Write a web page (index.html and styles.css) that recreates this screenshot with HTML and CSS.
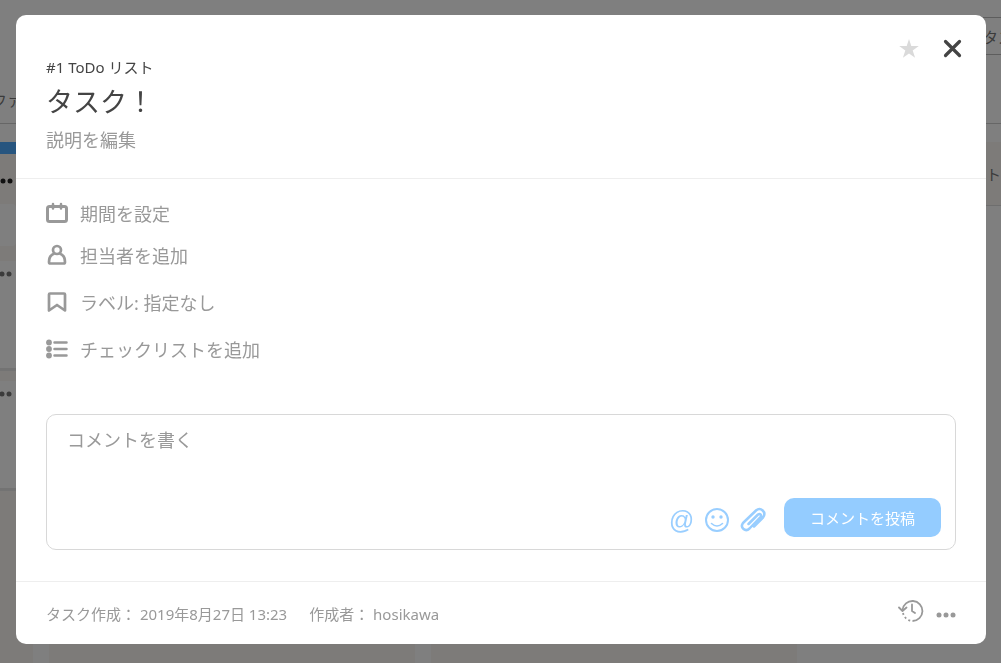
FILE: index.html
```html
<!DOCTYPE html>
<html lang="ja">
<head>
    <meta charset="UTF-8">
    <meta name="viewport" content="width=device-width, initial-scale=1.0">
    <title>タスク！ - ToDo リスト</title>
    <link rel="stylesheet" href="styles.css">
</head>
<body>
    <!-- Board behind the dialog -->
    <div class="board">
        <header class="board-header">
            <nav class="board-nav">
                <a href="#" class="board-tab">ファ</a>
                <div class="search-box">タス</div>
            </nav>
        </header>
        <main class="lanes">
            <section class="lane lane-first">
                <div class="lane-bar"></div>
                <div class="lane-menu">
                    <svg width="14" height="6" viewBox="0 0 14 6" fill="#222"><circle cx="3" cy="3" r="2.500"/><circle cx="10" cy="3" r="2.500"/></svg>
                </div>
                <div class="add-card"></div>
                <article class="card">
                    <svg width="14" height="6" viewBox="0 0 14 6" fill="#777"><circle cx="2" cy="3" r="2.500"/><circle cx="9" cy="3" r="2.500"/></svg>
                </article>
                <article class="card">
                    <svg width="14" height="6" viewBox="0 0 14 6" fill="#777"><circle cx="2" cy="3" r="2.500"/><circle cx="9" cy="3" r="2.500"/></svg>
                </article>
            </section>
            <section class="lane"></section>
            <section class="lane"></section>
            <div class="lane-space"></div>
            <section class="lane-new">ト</section>
        </main>
    </div>

    <!-- Task dialog -->
    <div class="overlay">
        <div class="modal" role="dialog" aria-labelledby="task-title">
            <div class="task-header">
                <div class="task-heading">
                    <p class="list-name">#1 ToDo リスト</p>
                    <h1 id="task-title">タスク！</h1>
                    <button class="text-button" type="button">説明を編集</button>
                </div>
                <div class="header-actions">
                    <button class="icon-button" type="button" aria-label="お気に入り">
                        <svg width="20" height="20" viewBox="0 0 20 20"><path fill="#dadada" d="M10 0L12.300 7.100H19.800L13.700 11.500L16.100 18.800L10 14.400L3.900 18.800L6.300 11.500L0.200 7.100H7.700Z"/></svg>
                    </button>
                    <button class="icon-button" type="button" aria-label="閉じる">
                        <svg width="20" height="20" viewBox="0 0 20 20"><path stroke="#444" stroke-width="3.200" stroke-linecap="round" d="M2.500 2.500L16.500 16.500M16.500 2.500L2.500 16.500"/></svg>
                    </button>
                </div>
            </div>

            <div class="task-body">
                <button class="task-option" type="button">
                    <svg width="22" height="22" viewBox="0 0 22 22" fill="none" stroke="#999" stroke-width="3" stroke-linecap="round"><rect x="1.500" y="4.500" width="19" height="15" rx="2"/><path stroke-width="2.500" d="M7 2V6.500M15 2V6.500"/></svg>
                    期間を設定
                </button>
                <button class="task-option" type="button">
                    <svg width="22" height="22" viewBox="0 0 22 22" fill="none" stroke="#999" stroke-width="2.700" stroke-linejoin="round"><circle cx="11" cy="6" r="4"/><path d="M8.500 9.500C5 10.500 3 13.500 3 18Q3 19.500 4.500 19.500H17.500Q19 19.500 19 18C19 13.500 17 10.500 13.500 9.500"/></svg>
                    担当者を追加
                </button>
                <button class="task-option option-wide" type="button">
                    <svg width="22" height="22" viewBox="0 0 22 22" fill="none" stroke="#999" stroke-width="2.700" stroke-linejoin="round"><path d="M3 3.500Q3 2.500 4 2.500H18Q19 2.500 19 3.500V19.500L11 14L3 19.500Z"/></svg>
                    ラベル: 指定なし
                </button>
                <button class="task-option option-wide" type="button">
                    <svg width="22" height="22" viewBox="0 0 22 22" fill="#999" stroke="#999" stroke-linecap="round"><g stroke="none"><circle cx="3" cy="4.500" r="2.900"/><circle cx="3" cy="11" r="2.900"/><circle cx="3" cy="17.500" r="2.900"/></g><path stroke-width="2.500" d="M8.500 4.500H20.500M8.500 11H20.500M8.500 17.500H20.500"/></svg>
                    チェックリストを追加
                </button>

                <form class="comment-form">
                    <textarea class="comment-input" aria-label="コメント" placeholder="コメントを書く"></textarea>
                    <div class="comment-actions">
                        <button class="icon-button at-button" type="button" aria-label="メンション">@</button>
                        <button class="icon-button" type="button" aria-label="絵文字">
                            <svg width="26" height="26" viewBox="0 0 26 26" fill="none" stroke="#99ceff" stroke-width="2"><circle cx="13" cy="13" r="11"/><path stroke-width="1.600" stroke-linecap="round" d="M7.500 16.500Q13 21.500 18.500 16.500"/><g fill="#99ceff" stroke="none"><circle cx="9" cy="10" r="1.700"/><circle cx="17" cy="10" r="1.700"/></g></svg>
                        </button>
                        <button class="icon-button" type="button" aria-label="ファイルを添付">
                            <svg width="26" height="26" viewBox="0 0 26 26" fill="none" stroke="#99ceff" stroke-width="2.500" stroke-linecap="round" stroke-linejoin="round"><path d="M8.500 17L18 7.500Q19.500 6.500 20.500 7.500T20.500 10L9.500 21.500Q6.500 24.500 3.500 22T3 16L16 3.500Q19.500 0.500 22.700 3.500T23 10.500L14 19.500"/></svg>
                        </button>
                        <button class="submit-button" type="submit">コメントを投稿</button>
                    </div>
                </form>
            </div>

            <footer class="task-footer">
                <span class="created">タスク作成： 2019年8月27日 13:23</span>
                <span class="author">作成者： hosikawa</span>
                <div class="footer-actions">
                    <button class="icon-button" type="button" aria-label="履歴">
                        <svg width="26" height="24" viewBox="0 0 26 24" fill="none" stroke="#999" stroke-width="1.800"><path d="M4.500 11A10 10 0 1 1 14.500 22"/><path stroke-dasharray="2 2.500" d="M5 14A10 10 0 0 0 14.500 22"/><path stroke-linecap="round" stroke-linejoin="round" d="M1 8.500L4.500 12L8.500 8.500M14 5.500V12L17 14"/></svg>
                    </button>
                    <button class="icon-button more-button" type="button" aria-label="その他">
                        <svg width="20" height="6" viewBox="0 0 20 6" fill="#999"><circle cx="3" cy="3" r="2.500"/><circle cx="10" cy="3" r="2.500"/><circle cx="17" cy="3" r="2.500"/></svg>
                    </button>
                </div>
            </footer>
        </div>
    </div>
</body>
</html>
```
FILE: styles.css
```css
* {
    box-sizing: border-box;
}

body {
    margin: 0;
    height: 100vh;
    overflow: hidden;
    background-color: #fff;
    color: #444;
    font-family: "Noto Sans", "Noto Sans CJK JP", sans-serif;
    font-size: 15px;
}

button {
    padding: 0;
    border: none;
    background: none;
    color: #999;
    font-family: inherit;
    cursor: pointer;
}

svg {
    display: block;
    flex: none;
}

/* Board */
.board {
    display: flex;
    flex-direction: column;
    height: 100%;
}

.board-header {
    height: 124px;
    padding-top: 17px;
    border-bottom: 1px solid #ccc;
}

.board-nav {
    display: flex;
    justify-content: space-between;
}

.board-tab {
    margin: 72px 0 0 -8px;
    color: #777;
    text-decoration: none;
}

.search-box {
    width: 18px;
    height: 38px;
    border: 1px solid #bbb;
    border-width: 1px 0;
    line-height: 38px;
    white-space: nowrap;
    color: #777;
}

.lanes {
    display: flex;
    flex: 1;
    gap: 16px;
    margin-top: 18px;
}

.lane {
    flex: none;
    width: 366px;
    background-color: #faf7f2;
}

.lane-first {
    width: 33px;
}

.lane-bar {
    height: 12px;
    background-color: #4eaaff;
}

.lane-menu {
    height: 50px;
    padding-top: 24px;
}

.add-card {
    height: 42px;
    width: 16px;
    margin-bottom: 15px;
    border-radius: 0 4px 4px 0;
    background-color: #fff;
}

.card {
    width: 20px;
    height: 110px;
    margin-bottom: 10px;
    padding-top: 10px;
    border-bottom: 3px solid #e6e6e6;
    background-color: #fff;
}

.lane-space {
    flex: 1;
}

.lane-new {
    width: 15px;
    height: 64px;
    border-bottom: 1px solid #ddd;
    background-color: #faf7f2;
    line-height: 64px;
    color: #777;
}

/* Dialog */
.overlay {
    position: fixed;
    inset: 0;
    padding: 15px 15px 0 16px;
    background-color: rgba(0, 0, 0, 0.5);
}

.modal {
    border-radius: 10px;
    background-color: #fff;
}

.task-header {
    display: flex;
    justify-content: space-between;
    height: 164px;
    padding: 40px 23px 0 30px;
    border-bottom: 1px solid #eee;
}

.list-name {
    margin: 0;
    line-height: 24px;
}

h1 {
    margin: 0;
    font-size: 27px;
    font-weight: 400;
    line-height: 46px;
}

.text-button {
    font-size: 18px;
    line-height: 30px;
}

.header-actions {
    display: flex;
    align-items: flex-start;
    gap: 24px;
    margin-top: -16px;
}

.task-body {
    padding: 15px 30px 31px;
}

.task-option {
    display: flex;
    align-items: center;
    gap: 12px;
    height: 37px;
    margin-bottom: 5px;
    font-size: 18px;
    white-space: nowrap;
}

.option-wide {
    height: 47px;
    margin-bottom: 0;
}

.comment-form {
    height: 136px;
    margin-top: 42px;
    padding: 10px 14px 12px 20px;
    border: 1px solid #d8d8d8;
    border-radius: 10px;
}

.comment-input {
    display: block;
    width: 100%;
    height: 73px;
    padding: 0;
    border: none;
    outline: none;
    resize: none;
    font-family: inherit;
    font-size: 18px;
    line-height: 30px;
}

.comment-input::placeholder {
    color: #999;
}

.comment-actions {
    display: flex;
    align-items: center;
    justify-content: flex-end;
    gap: 10px;
}

.comment-actions .icon-button {
    margin-top: 4px;
}

.at-button {
    color: #99ceff;
    font-family: "Liberation Sans", sans-serif;
    font-size: 25px;
    font-style: italic;
    line-height: 26px;
}

.submit-button {
    width: 157px;
    height: 39px;
    margin-left: 8px;
    border-radius: 10px;
    background-color: #94ccff;
    color: #fff;
    font-size: 15px;
}

.task-footer {
    display: flex;
    align-items: center;
    gap: 22px;
    height: 63px;
    border-top: 1px solid #eee;
    padding: 0 30px;
    color: #999;
}

.footer-actions {
    display: flex;
    align-items: center;
    gap: 12px;
    margin-bottom: 4px;
    margin-left: auto;
}

.more-button {
    margin-top: 8px;
}
```
